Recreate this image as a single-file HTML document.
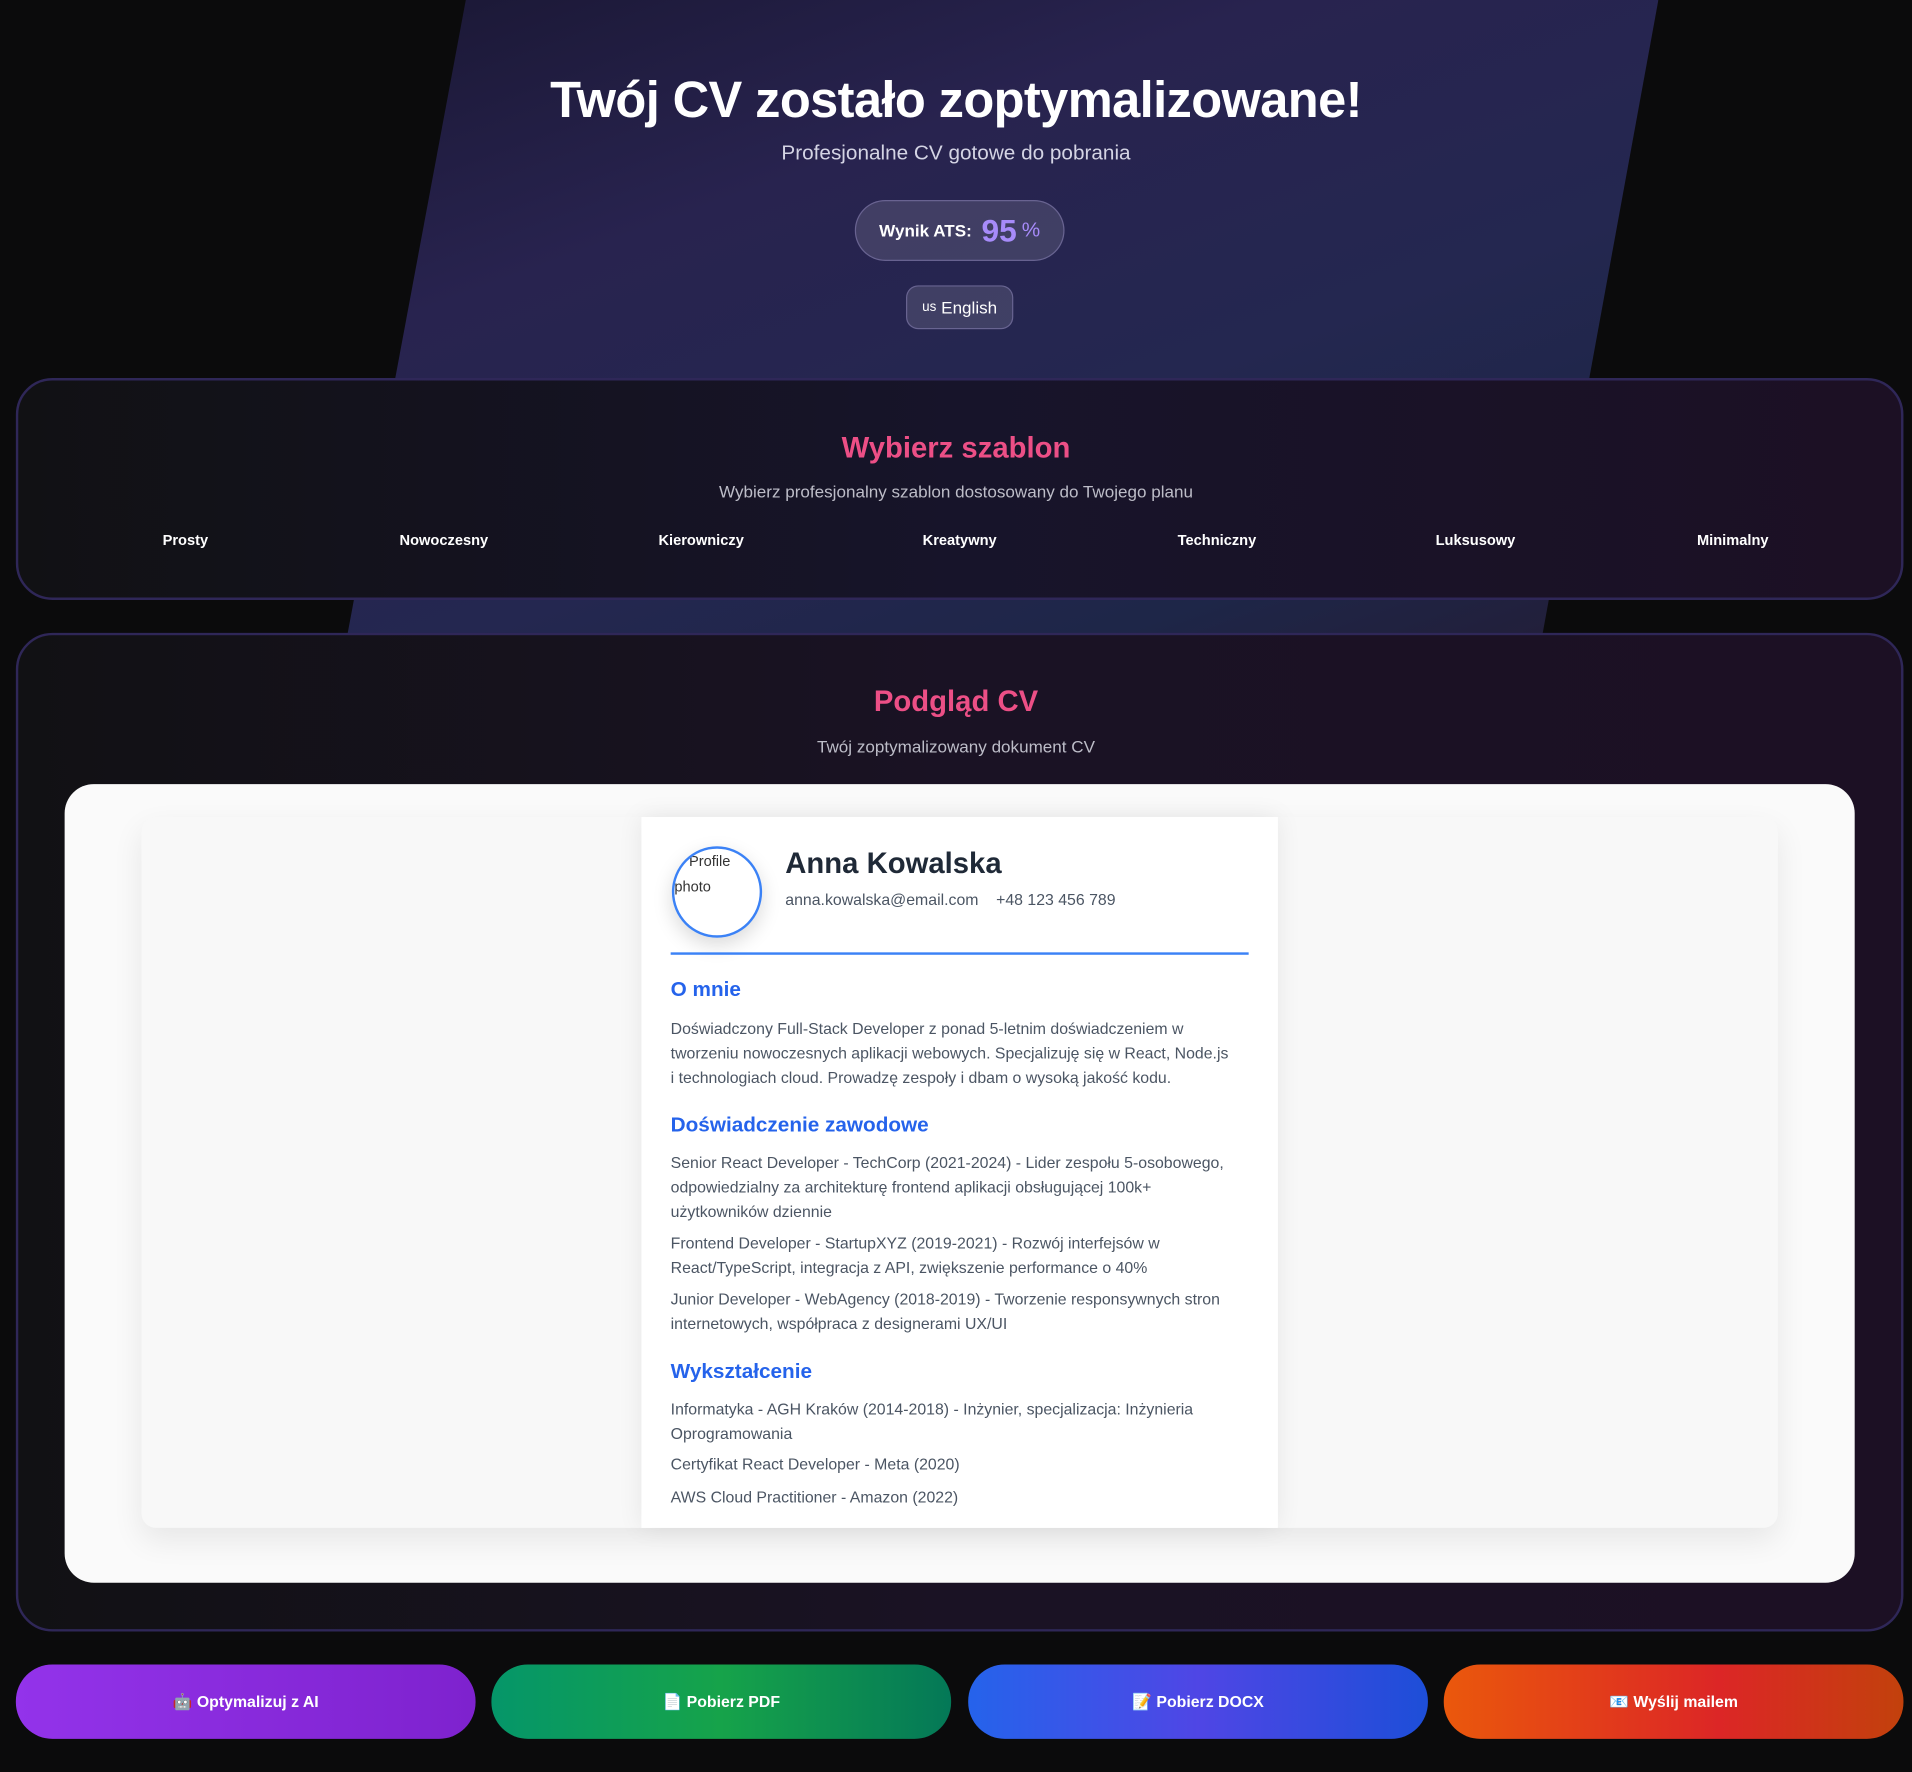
<!DOCTYPE html>
<html><head><meta charset="utf-8"><style>
*{margin:0;padding:0;box-sizing:border-box}
html,body{width:1912px;height:1772px;overflow:hidden;background:#0b0b0c;font-family:"Liberation Sans",sans-serif}
#w{position:absolute;left:0;top:0;width:1568px;height:1453px;transform:scale(1.219388);transform-origin:0 0;background:#0b0b0c}
.a{position:absolute}
.c{position:absolute;left:0;width:1568px;text-align:center}
.hero{position:absolute;left:0;top:0;width:1568px;height:520px;background:linear-gradient(160deg,#15132a 0%,#28234f 35%,#242750 60%,#1e2648 78%,#25192f 100%);clip-path:polygon(382px 0,1360px 0,1265px 520px,285px 520px)}
.card{position:absolute;left:13px;width:1548px;border:2px solid #2f2758;border-radius:30px;background:linear-gradient(90deg,#111114 0%,#17142a 50%,#1c1024 100%)}
.tn{position:absolute;top:436px;font-size:12px;font-weight:bold;color:#fff;transform:translateX(-50%);white-space:nowrap}
.btn{position:absolute;top:1365px;height:61px;width:377px;border-radius:30px;color:#fff;font-size:13px;font-weight:bold;display:flex;align-items:center;justify-content:center}
.t{position:absolute;left:550px;font-size:13px;line-height:20px;color:#4b5563;white-space:nowrap}
.h{position:absolute;left:550px;font-size:17px;font-weight:bold;color:#2563eb;white-space:nowrap;line-height:22px}
</style></head><body><div id="w">
<div class="hero"></div>
<div class="c" style="top:57px;font-size:41.5px;font-weight:bold;color:#fff;line-height:50px;letter-spacing:-0.5px">Twój CV zostało zoptymalizowane!</div>
<div class="c" style="top:116px;font-size:17px;color:#d4d4e4;line-height:20px">Profesjonalne CV gotowe do pobrania</div>
<div class="a" style="left:701px;top:164px;width:172px;height:50px;border-radius:25px;background:rgba(255,255,255,0.12);border:1px solid rgba(180,170,230,0.35);display:flex;align-items:center;justify-content:center;gap:8px"><span style="color:#fff;font-size:14px;font-weight:bold">Wynik ATS:</span><span style="color:#a78bfa;font-size:26px;font-weight:bold">95</span><span style="color:#a78bfa;font-size:17px;margin-left:-4px">%</span></div>
<div class="a" style="left:743px;top:234px;width:88px;height:36px;border-radius:10px;background:rgba(255,255,255,0.12);border:1px solid rgba(180,170,230,0.35);display:flex;align-items:center;justify-content:center;color:#fff;font-size:14px"><span style="font-size:11px;margin-right:4px">us</span>English</div>

<div class="card" style="top:310px;height:182px"></div>
<div class="c" style="top:354px;font-size:24px;font-weight:bold;color:#ec4f86;line-height:28px">Wybierz szablon</div>
<div class="c" style="top:394px;font-size:14px;color:#bdbdc8;line-height:18px">Wybierz profesjonalny szablon dostosowany do Twojego planu</div>
<div class="tn" style="left:152px">Prosty</div><div class="tn" style="left:364px">Nowoczesny</div><div class="tn" style="left:575px">Kierowniczy</div><div class="tn" style="left:787px">Kreatywny</div><div class="tn" style="left:998px">Techniczny</div><div class="tn" style="left:1210px">Luksusowy</div><div class="tn" style="left:1421px">Minimalny</div>

<div class="card" style="top:519px;height:819px;background:linear-gradient(90deg,#111114 0%,#1a1224 50%,#1c1024 100%)"></div>
<div class="c" style="top:562px;font-size:24px;font-weight:bold;color:#ec4f86;line-height:28px">Podgląd CV</div>
<div class="c" style="top:603px;font-size:14px;color:#bdbdc8;line-height:18px">Twój zoptymalizowany dokument CV</div>
<div class="a" style="left:53px;top:643px;width:1468px;height:655px;border-radius:24px;background:#fafafa"></div>
<div class="a" style="left:116px;top:670px;width:1342px;height:583px;border-radius:12px;background:#f8f8f8;box-shadow:0 10px 25px rgba(0,0,0,0.08)"></div>
<div class="a" style="left:526px;top:670px;width:522px;height:583px;background:#fff;box-shadow:0 0 20px rgba(0,0,0,0.08)"></div>
<div class="a" style="left:551px;top:694px;width:74px;height:75px;border-radius:50%;border:2px solid #3b82f6;box-shadow:0 6px 16px rgba(0,0,0,0.15);font-size:12px;color:#333;line-height:21px;overflow:hidden"><div style="padding-left:12px">Profile</div><div>photo</div></div>
<div class="a" style="left:644px;top:694px;font-size:24px;font-weight:bold;color:#1f2937;line-height:30px">Anna Kowalska</div>
<div class="a" style="left:644px;top:730px;font-size:13px;color:#4b5563;line-height:16px;white-space:nowrap">anna.kowalska@email.com&nbsp;&nbsp;&nbsp;&nbsp;+48 123 456 789</div>
<div class="a" style="left:550px;top:781px;width:474px;height:2px;background:#3b82f6"></div>
<div class="h" style="top:801px">O mnie</div>
<div class="t" style="top:834px">Doświadczony Full-Stack Developer z ponad 5-letnim doświadczeniem w<br>tworzeniu nowoczesnych aplikacji webowych. Specjalizuję się w React, Node.js<br>i technologiach cloud. Prowadzę zespoły i dbam o wysoką jakość kodu.</div>
<div class="h" style="top:912px">Doświadczenie zawodowe</div>
<div class="t" style="top:944px">Senior React Developer - TechCorp (2021-2024) - Lider zespołu 5-osobowego,<br>odpowiedzialny za architekturę frontend aplikacji obsługującej 100k+<br>użytkowników dziennie</div>
<div class="t" style="top:1010px">Frontend Developer - StartupXYZ (2019-2021) - Rozwój interfejsów w<br>React/TypeScript, integracja z API, zwiększenie performance o 40%</div>
<div class="t" style="top:1056px">Junior Developer - WebAgency (2018-2019) - Tworzenie responsywnych stron<br>internetowych, współpraca z designerami UX/UI</div>
<div class="h" style="top:1114px">Wykształcenie</div>
<div class="t" style="top:1146px">Informatyka - AGH Kraków (2014-2018) - Inżynier, specjalizacja: Inżynieria<br>Oprogramowania</div>
<div class="t" style="top:1191px">Certyfikat React Developer - Meta (2020)</div>
<div class="t" style="top:1218px">AWS Cloud Practitioner - Amazon (2022)</div>

<div class="btn" style="left:13px;background:linear-gradient(90deg,#9333ea,#7e22ce)">🤖 Optymalizuj z AI</div>
<div class="btn" style="left:403px;background:linear-gradient(90deg,#059669,#16a34a 50%,#047857)">📄 Pobierz PDF</div>
<div class="btn" style="left:794px;background:linear-gradient(90deg,#2563eb,#4f46e5 50%,#1d4ed8)">📝 Pobierz DOCX</div>
<div class="btn" style="left:1184px;background:linear-gradient(90deg,#ea580c,#dc2626 60%,#c2410c)">📧 Wyślij mailem</div>
</div></body></html>
